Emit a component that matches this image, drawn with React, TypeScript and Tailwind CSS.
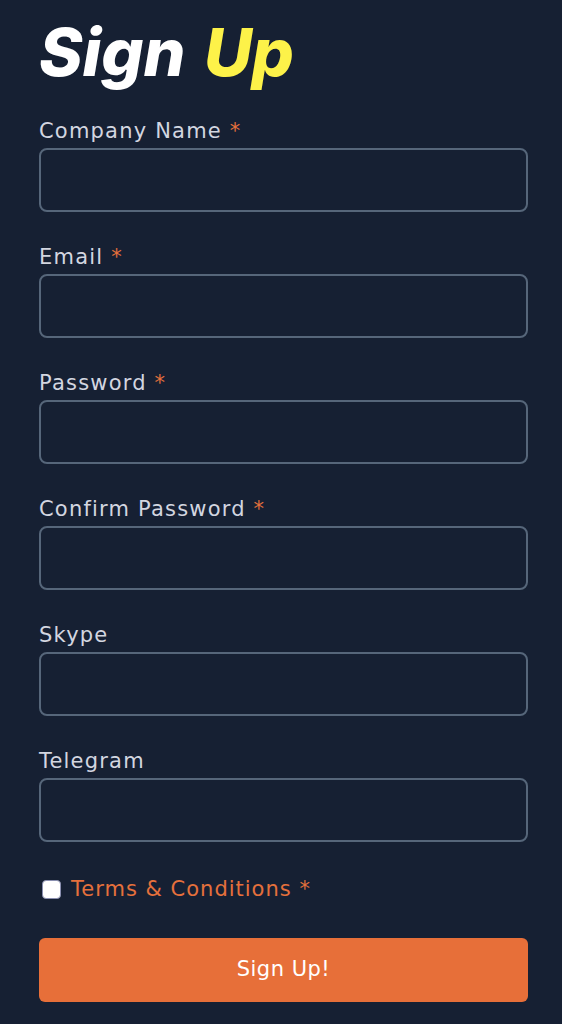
export default function App() {
  const fields = [
    { label: 'Company Name', required: true, type: 'text' },
    { label: 'Email', required: true, type: 'email' },
    { label: 'Password', required: true, type: 'password' },
    { label: 'Confirm Password', required: true, type: 'password' },
    { label: 'Skype', required: false, type: 'text' },
    { label: 'Telegram', required: false, type: 'text' },
  ]

  return (
    <div className="min-h-[1024px] w-full bg-[#162033] pl-[39px] pr-[34px] pt-[14px] font-['DejaVu_Sans',sans-serif]">
      <h1 className="font-['Inter',sans-serif] text-[66px] font-extrabold italic leading-[76px] text-white">
        Sign <span className="ml-[4px] text-[#fdf249]">Up</span>
      </h1>

      <form className="mt-[28px] flex flex-col">
        {fields.map((f) => (
          <div key={f.label} className="mb-[32px] flex flex-col">
            <label className="mb-[4px] text-[21px] leading-[26px] tracking-[1.2px] text-[#d3d6e0]">
              {f.label}
              {f.required && <span className="text-[#e5703c]"> *</span>}
            </label>
            <input
              type={f.type}
              className="h-[64px] w-full rounded-[8px] border-2 border-[#56667a] bg-transparent px-3 text-[18px] text-white outline-none"
            />
          </div>
        ))}

        <label className="mt-[2px] flex items-center gap-[10px] pl-[3px]">
          <span className="h-[19px] w-[19px] rounded-[4px] border border-[#8a8fb0] bg-white"></span>
          <span className="text-[21px] leading-[26px] tracking-[1px] text-[#e5703c]">Terms &amp; Conditions *</span>
        </label>

        <button
          type="button"
          className="mt-[36px] h-[64px] w-full rounded-[6px] bg-[#e76f39] text-[21px] tracking-[0.5px] text-white"
        >
          Sign Up!
        </button>
      </form>
    </div>
  )
}
